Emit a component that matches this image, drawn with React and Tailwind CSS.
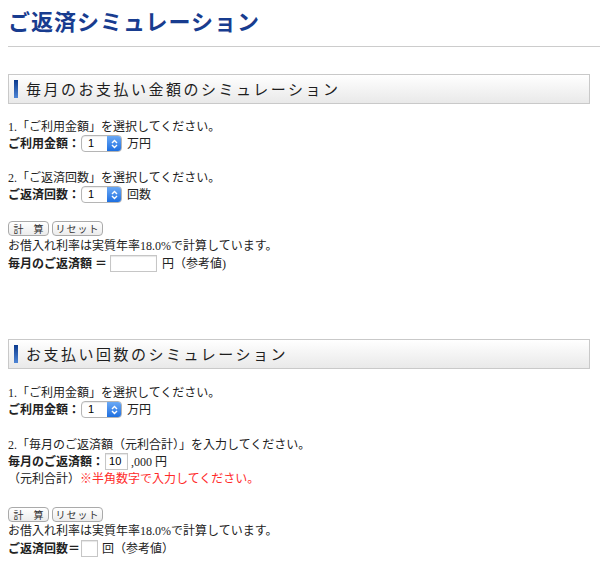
const serif = { fontFamily: '"Liberation Serif", "Noto Sans CJK JP", serif' }

function SectionHeader({ children }) {
  return (
    <div className="mr-[10px] flex h-[30px] items-center border border-[#c9c9c9] bg-gradient-to-b from-white to-[#e9e9e9] pl-[5px]">
      <span className="h-[18px] w-[4px] bg-gradient-to-b from-[#0b3a8e] to-[#4f86d6]" />
      <span
        className="ml-[8px] text-[15px] tracking-[2.5px] text-[#1e1e1e]"
        style={{ fontFamily: '"Noto Sans CJK JP", sans-serif' }}
      >
        {children}
      </span>
    </div>
  )
}

function Line({ children, className = "" }) {
  return <div className={`flex h-[17px] items-center whitespace-nowrap ${className}`}>{children}</div>
}

function Select() {
  return (
    <span className="ml-[1px] mr-[5px] flex h-[17px] w-[41px] overflow-hidden rounded-[4px] border border-[#b5b5b5] bg-white shadow-[inset_0_1px_1px_rgba(0,0,0,0.08)]">
      <span className="flex flex-1 items-center pl-[6px] text-[11px] text-black" style={{ fontFamily: '"Liberation Sans", sans-serif' }}>
        1
      </span>
      <span className="flex w-[14px] items-center justify-center bg-gradient-to-b from-[#6aa9f5] to-[#1c6fe0]">
        <svg width="7" height="10" viewBox="0 0 7 10" fill="none" stroke="white" strokeWidth="1.4">
          <path d="M1 4 L3.5 1.5 L6 4" />
          <path d="M1 6 L3.5 8.5 L6 6" />
        </svg>
      </span>
    </span>
  )
}

function Buttons() {
  const btn =
    "flex h-[15px] items-center justify-center rounded-[4px] border border-[#aaa] bg-gradient-to-b from-white to-[#ececec] text-[10px] text-[#333]"
  return (
    <div className="flex gap-[3px]" style={{ fontFamily: '"Noto Sans CJK JP", sans-serif' }}>
      <span className={`${btn} w-[41px]`}>計　算</span>
      <span className={`${btn} w-[51px] tracking-[1px]`}>リセット</span>
    </div>
  )
}

function TextBox({ width, value, className = "" }) {
  return (
    <span
      className={`flex h-[17px] items-center border border-[#c6c6c6] bg-white pl-[3px] text-[11px] text-black shadow-[inset_0_1px_1px_rgba(0,0,0,0.1)] ${width} ${className}`}
      style={{ fontFamily: '"Liberation Sans", sans-serif' }}
    >
      {value}
    </span>
  )
}

export default function App() {
  return (
    <div className="h-[574px] w-[600px] overflow-hidden bg-white pl-2 text-[12px] text-[#222]" style={serif}>
      <h1
        className="pt-[7px] text-[22px] font-bold tracking-[1px] text-[#183c8f]"
        style={{ fontFamily: '"Noto Sans CJK JP", sans-serif', lineHeight: "26px" }}
      >
        ご返済シミュレーション
      </h1>
      <div className="mt-[13px] h-px bg-[#cccccc]" />

      <div className="mt-[27px]">
        <SectionHeader>毎月のお支払い金額のシミュレーション</SectionHeader>
        <div className="mt-[14px]">
          <Line>1.「ご利用金額」を選択してください。</Line>
          <Line>
            <b>ご利用金額：</b>
            <Select />
            万円
          </Line>
          <Line className="mt-[17px]">2.「ご返済回数」を選択してください。</Line>
          <Line>
            <b>ご返済回数：</b>
            <Select />
            回数
          </Line>
          <div className="mt-[18px]">
            <Buttons />
          </div>
          <Line className="mt-[1px]">お借入れ利率は実質年率18.0%で計算しています。</Line>
          <Line className="mt-[1px]">
            <b>毎月のご返済額 ＝</b>
            <TextBox width="w-[47px]" className="ml-[3px] mr-[5px]" />
            <span>円（参考値)</span>
          </Line>
        </div>
      </div>

      <div className="mt-[67px]">
        <SectionHeader>お支払い回数のシミュレーション</SectionHeader>
        <div className="mt-[15px]">
          <Line>1.「ご利用金額」を選択してください。</Line>
          <Line>
            <b>ご利用金額：</b>
            <Select />
            万円
          </Line>
          <Line className="mt-[18px]">2.「毎月のご返済額（元利合計）」を入力してください。</Line>
          <Line>
            <b>毎月のご返済額：</b>
            <TextBox width="w-[23px]" value="10" className="ml-[1px] mr-[3px]" />
            ,000 円
          </Line>
          <Line>
            （元利合計）<span className="text-[#ff2a2a]">※半角数字で入力してください。</span>
          </Line>
          <div className="mt-[20px]">
            <Buttons />
          </div>
          <Line>お借入れ利率は実質年率18.0%で計算しています。</Line>
          <Line className="mt-px">
            <b>ご返済回数＝</b>
            <TextBox width="w-[17px]" className="ml-[1px] mr-[4px]" />
            <span>回（参考値）</span>
          </Line>
        </div>
      </div>
    </div>
  )
}
